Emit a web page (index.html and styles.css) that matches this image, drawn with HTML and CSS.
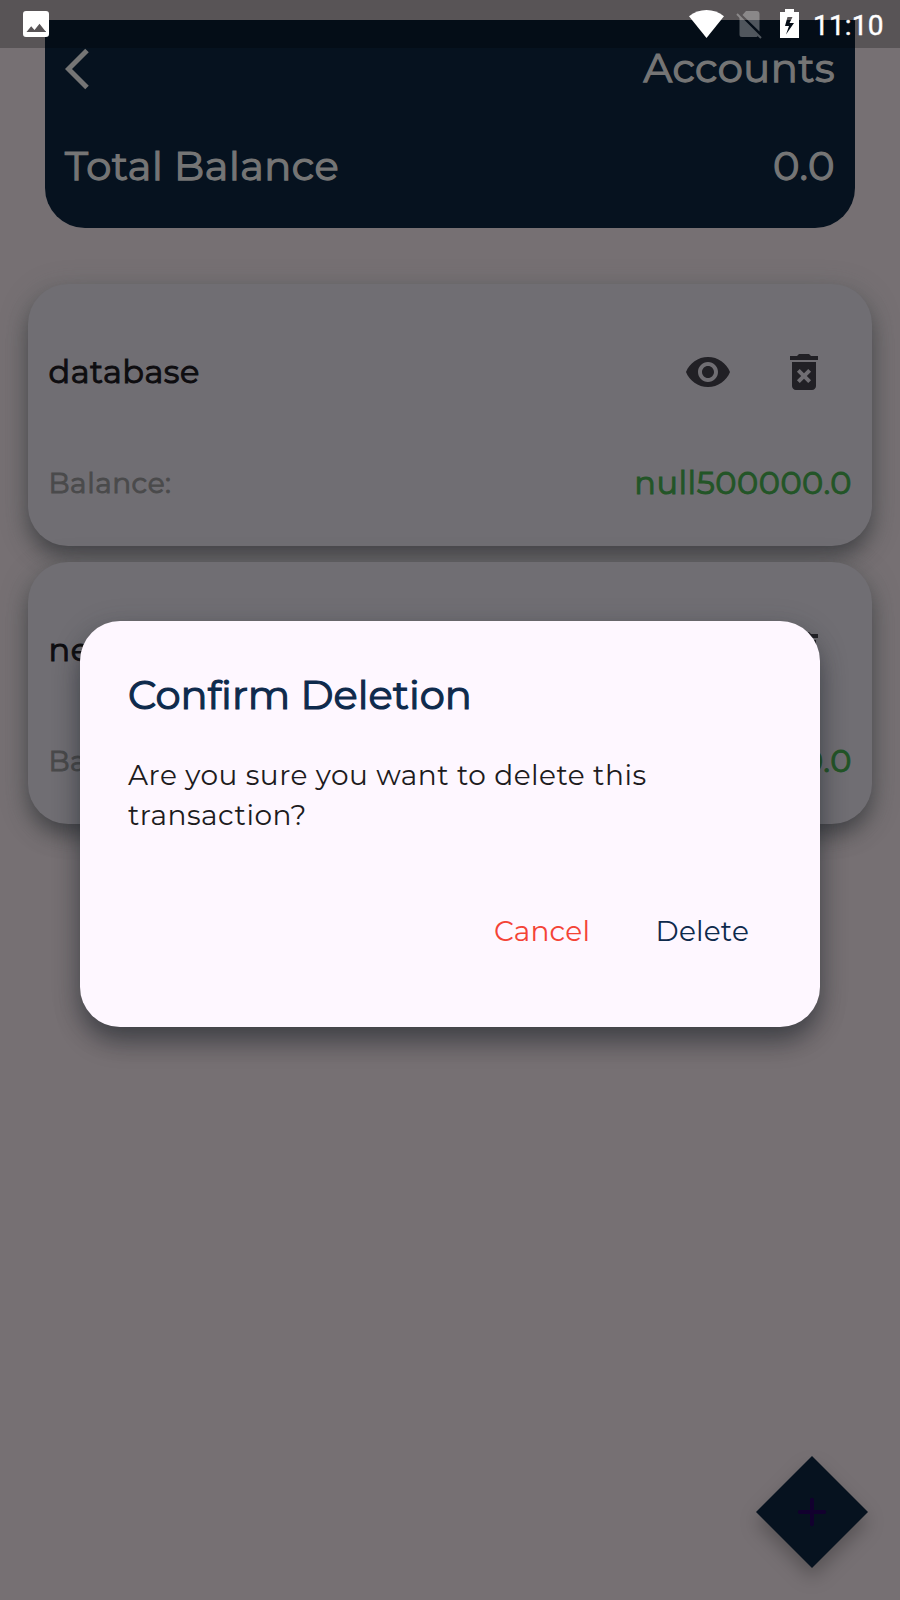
FILE: index.html
```
<!DOCTYPE html>
<html lang="en">
<head>
<meta charset="utf-8">
<title>Accounts</title>
<link rel="stylesheet" href="styles.css">
</head>
<body>
<svg class="defs" aria-hidden="true">
  <symbol id="eye" viewBox="0 0 24 24"><path d="M12 4.5C7 4.500 2.730 7.610 1 12c1.730 4.390 6 7.500 11 7.500s9.270-3.110 11-7.500c-1.730-4.390-6-7.500-11-7.500zM12 17c-2.760 0-5-2.240-5-5s2.240-5 5-5 5 2.240 5 5-2.240 5-5 5zm0-8c-1.660 0-3 1.340-3 3s1.340 3 3 3 3-1.340 3-3-1.340-3-3-3z"/></symbol>
  <symbol id="trash" viewBox="0 0 24 24"><path d="M6 19c0 1.100.9 2 2 2h8c1.100 0 2-.9 2-2V7H6v12zm2.460-7.120l1.410-1.410L12 12.590l2.120-2.120 1.410 1.410L13.410 14l2.120 2.120-1.410 1.410L12 15.410l-2.120 2.120-1.410-1.410L10.590 14l-2.130-2.120zM15.500 4l-1-1h-5l-1 1H5v2h14V4z"/></symbol>
</svg>
<div class="screen">
  <header class="header">
    <div class="header-row">
      <svg class="back" viewBox="0 0 26 42"><path d="M22 2.500L3.500 21L22 39.500"/></svg>
      <span class="heading">Accounts</span>
    </div>
    <div class="header-row">
      <span class="heading">Total Balance</span>
      <span class="heading">0.0</span>
    </div>
  </header>

  <main class="accounts">
    <section class="card">
      <div class="card-top">
        <span class="name">database</span>
        <span class="tools"><svg class="icon"><use href="#eye"/></svg><svg class="icon"><use href="#trash"/></svg></span>
      </div>
      <div class="card-bottom"><span class="label">Balance:</span><span class="amount">null500000.0</span></div>
    </section>
    <section class="card">
      <div class="card-top">
        <span class="name">ne</span>
        <span class="tools"><svg class="icon"><use href="#trash"/></svg></span>
      </div>
      <div class="card-bottom"><span class="label">Ba</span><span class="amount">0.0</span></div>
    </section>
  </main>

  <svg class="fab" viewBox="0 0 112 112"><path d="M56 0l56 56-56 56L0 56z" fill="#06121f"/><path d="M56 43.800v24.400M43.800 56h24.400" stroke="#12002e" stroke-width="4" stroke-linecap="round"/></svg>

  <div class="dialog" role="dialog">
    <h2 class="dialog-title">Confirm Deletion</h2>
    <p class="dialog-text">Are you sure you want to delete this transaction?</p>
    <div class="actions"><span class="cancel">Cancel</span><span class="delete">Delete</span></div>
  </div>

  <div class="status">
    <svg class="picture" viewBox="0 0 26 26"><path fill-rule="evenodd" d="M3 0h20a3 3 0 0 1 3 3v20a3 3 0 0 1-3 3H3a3 3 0 0 1-3-3V3a3 3 0 0 1 3-3zM3.500 21h19.500l-6.500-8.200-5 6.200-3.300-3.800z"/></svg>
    <span class="indicators">
      <svg class="wifi" viewBox="0 0 35 28"><path d="M17.500 28L0 6.200C10-2 25-2 35 6.200z"/></svg>
      <svg class="sim" viewBox="0 0 26 28"><path d="M10 0H20.500a3 3 0 0 1 3 3v17.500L6.500 4zM3.500 6L22 24.500a2.500 2.500 0 0 1-1.500 1.500H6a2.500 2.500 0 0 1-2.500-2.500z"/><path class="slash" d="M1 3l24 24"/></svg>
      <svg class="battery" viewBox="0 0 19 29"><path fill-rule="evenodd" d="M5 0h9v3h5v26H0V3h5zM7.500 8L5 17h4L6 25.500l8-11.500H9.500l3-6z"/></svg>
      <span class="clock">11:10</span>
    </span>
  </div>
</div>
</body>
</html>
```
FILE: styles.css
```
* { box-sizing: border-box; }
body { margin: 0; font-family: Montserrat, Inter, "Open Sans", sans-serif; }
.defs { display: none; }
.screen {
  position: relative;
  height: 1600px;
  padding-top: 20px;
  overflow: hidden;
  background: #767073;
}

.header {
  display: flex;
  flex-direction: column;
  gap: 48px;
  width: 810px;
  height: 208px;
  margin: 0 auto;
  padding: 23px 20px 0;
  border-radius: 0 0 40px 40px;
  background: #06121f;
  color: #757575;
}
.header-row { display: flex; justify-content: space-between; align-items: center; height: 50px; }
.back { width: 26px; height: 42px; margin-top: 2px; fill: none; stroke: #757575; stroke-width: 5; }
.heading { font-size: 40px; line-height: 50px; letter-spacing: .500px; -webkit-text-stroke: 1.250px; }

.accounts { display: flex; flex-direction: column; gap: 16px; padding: 56px 28px 0; }
.card {
  height: 262px;
  padding: 64px 20px 0;
  border-radius: 40px;
  background: #706e73;
  box-shadow: 0 13px 22px -2px rgba(0, 0, 8, .36), 0 6px 28px rgba(80, 90, 90, .45);
}
.card-top { display: flex; justify-content: space-between; align-items: center; height: 48px; padding-right: 24px; }
.name { font-size: 32px; line-height: 40px; letter-spacing: .500px; margin-left: .500px; color: #0e0d10; -webkit-text-stroke: 1px; }
.tools { display: flex; gap: 48px; }
.icon { width: 48px; height: 48px; fill: #212025; }
.card-bottom { display: flex; justify-content: space-between; align-items: center; padding-top: 66.500px; line-height: 40px; }
.label { font-size: 28px; letter-spacing: .500px; margin-left: .500px; color: #4a4a4b; -webkit-text-stroke: .900px; }
.amount { font-size: 32px; letter-spacing: .500px; color: #235527; -webkit-text-stroke: 1px; }

.fab {
  position: absolute;
  right: 32px;
  bottom: 32px;
  width: 112px;
  height: 112px;
  overflow: visible;
  filter: drop-shadow(0 10px 9px rgba(0, 0, 0, .25));
}

.dialog {
  position: absolute;
  top: 621px;
  left: 80px;
  width: 740px;
  height: 406px;
  padding: 48.500px 48px 0;
  border-radius: 40px;
  background: #fef7ff;
  box-shadow: 0 16px 26px -2px rgba(0, 8, 16, .4), 0 6px 28px rgba(50, 60, 70, .26);
}
.dialog-title { margin: 0; font-size: 40px; line-height: 50px; font-weight: 400; color: #0e2a4c; -webkit-text-stroke: 1.150px; }
.dialog-text { margin: 35.500px 0 0; font-size: 28px; line-height: 40px; letter-spacing: .500px; color: #1d1b20; }
.actions { display: flex; justify-content: flex-end; gap: 65.400px; margin-top: 76px; padding-right: 23px; font-size: 28px; line-height: 40px; letter-spacing: .200px; }
.cancel { color: #f44336; }
.delete { color: #0e2a4c; }

.status {
  position: absolute;
  inset: 0 0 auto;
  display: flex;
  justify-content: space-between;
  align-items: flex-start;
  height: 48px;
  padding: 0 15px 0 23px;
  background: rgba(0, 0, 0, .25);
  color: #fff;
  fill: #fff;
}
.picture { width: 26px; height: 26px; margin-top: 11px; }
.indicators { display: flex; align-items: flex-start; }
.wifi { width: 35px; height: 28px; margin-top: 10px; }
.sim { width: 26px; height: 28px; margin: 11px 0 0 12px; opacity: .3; }
.slash { stroke: #fff; stroke-width: 2; }
.battery { width: 19px; height: 29px; margin: 9px 0 0 18px; }
.clock { width: 72px; margin: 8.500px 0 0 14px; font: 400 28px/34px Roboto, sans-serif; letter-spacing: .200px; -webkit-text-stroke: .400px; white-space: nowrap; }
```
